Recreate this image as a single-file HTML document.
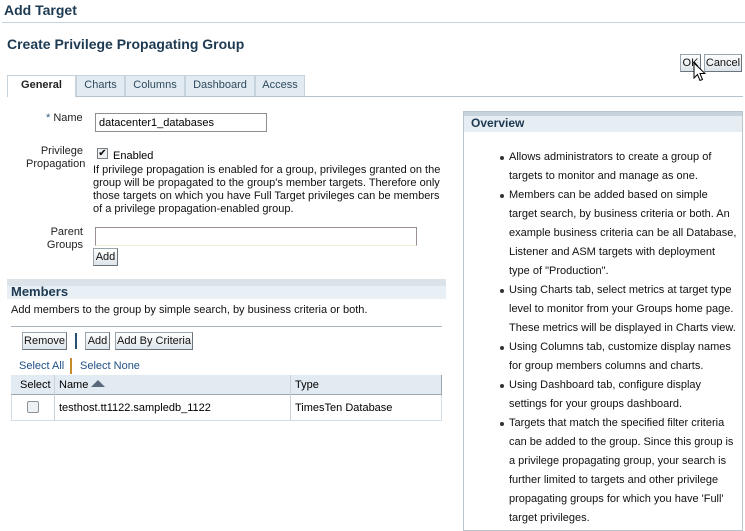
<!DOCTYPE html>
<html><head><meta charset="utf-8"><style>
*{margin:0;padding:0;box-sizing:border-box}
body{width:745px;height:528px;background:#fff;font-family:"Liberation Sans",sans-serif;font-size:11px;color:#000;position:relative;overflow:hidden}
.a{position:absolute;white-space:nowrap}
.btn{position:absolute;height:18px;border:1px solid #9aa5ae;border-right-color:#6b747c;border-bottom-color:#6b747c;background:linear-gradient(#fdfefe,#dde5ea);font-size:11px;line-height:16px;text-align:center;color:#111}
.tab{position:absolute;top:75px;height:21px;background:#e3ebf2;border:1px solid #c7d3dc;border-bottom:none;color:#2e4a5e;font-size:11px;line-height:19px;text-align:center}
.link{color:#1d4f86}
ul{list-style:none}
.ov{position:absolute;left:509px;top:148px;line-height:19px;color:#111}
.ov div{white-space:nowrap;position:relative}
.b{position:absolute;left:-9px;top:8px;width:4px;height:4px;border-radius:2px;background:#333}
</style></head><body>
<div class="a" style="left:4px;top:2px;font-size:14px;font-weight:bold;color:#1d3a52">Add Target</div>
<div class="a" style="left:2px;top:22px;width:743px;height:1px;background:#c5d3df"></div>
<div class="a" style="left:7px;top:36px;font-size:14px;font-weight:bold;color:#1d3a52">Create Privilege Propagating Group</div>
<div class="btn" style="left:680px;top:54px;width:21px">OK</div>
<div class="btn" style="left:704px;top:54px;width:38px">Cancel</div>
<svg class="a" style="left:693px;top:62px" width="14" height="20" viewBox="0 0 14 20"><path d="M1 1 L1 16 L4.5 12.5 L7 18.5 L9.5 17.5 L7 11.5 L12 11.5 Z" fill="#fff" stroke="#000" stroke-width="1"/></svg>
<!-- tabs -->
<div class="a" style="left:7px;top:96px;width:736px;height:1px;background:#b7c3cc"></div>
<div class="a" style="left:7px;top:75px;width:69px;height:22px;background:#fff;border:1px solid #c7d3dc;border-bottom:none;font-weight:bold;color:#222;text-align:center;line-height:19px">General</div>
<div class="tab" style="left:76px;width:49px">Charts</div>
<div class="tab" style="left:125px;width:60px">Columns</div>
<div class="tab" style="left:185px;width:70px">Dashboard</div>
<div class="tab" style="left:255px;width:50px">Access</div>
<!-- form -->
<div class="a" style="left:46px;top:112px;color:#222"><span style="color:#2a5b87">*</span> Name</div>
<div class="a" style="left:95px;top:113px;width:172px;height:19px;border:1px solid #8a8f94;padding:2px 3px;line-height:14px">datacenter1_databases</div>
<div class="a" style="left:26px;top:145px;width:57px;text-align:right;line-height:13px;color:#222">Privilege<br>Propagation</div>
<div class="a" style="left:97px;top:148px;width:11px;height:11px;border:1px solid #7a8087;background:#eef0f2;font-size:10px;line-height:9px;text-align:center">✔</div>
<div class="a" style="left:113px;top:150px">Enabled</div>
<div class="a" style="left:93px;top:164px;line-height:13px;color:#111">If privilege propagation is enabled for a group, privileges granted on the<br>group will be propagated to the group's member targets. Therefore only<br>those targets on which you have Full Target privileges can be members<br>of a privilege propagation-enabled group.</div>
<div class="a" style="left:40px;top:226px;width:43px;text-align:right;line-height:13px;color:#222">Parent<br>Groups</div>
<div class="a" style="left:95px;top:227px;width:322px;height:19px;border:1px solid #9a9091;border-bottom-color:#f0edd8;background:#fff"></div>
<div class="btn" style="left:93px;top:248px;width:25px">Add</div>
<!-- members -->
<div class="a" style="left:7px;top:279px;width:439px;height:20px;background:linear-gradient(#dce3e8 0,#dce3e8 7px,#e8eff5 7px)"></div>
<div class="a" style="left:11px;top:284px;font-size:13px;font-weight:bold;color:#1d3a52">Members</div>
<div class="a" style="left:11px;top:304px;color:#111">Add members to the group by simple search, by business criteria or both.</div>
<div class="a" style="left:11px;top:326px;width:431px;height:1px;background:#aab4bf"></div>
<div class="btn" style="left:22px;top:332px;width:45px">Remove</div>
<div class="a" style="left:75px;top:333px;width:2px;height:16px;background:#2a4f74"></div>
<div class="btn" style="left:85px;top:332px;width:25px">Add</div>
<div class="btn" style="left:115px;top:332px;width:78px">Add By Criteria</div>
<div class="a link" style="left:19px;top:360px">Select All</div>
<div class="a" style="left:70px;top:358px;width:2px;height:16px;background:#c68a2a"></div>
<div class="a link" style="left:80px;top:360px">Select None</div>
<div class="a" style="left:11px;top:375px;width:431px;height:46px;border:1px solid #d4dde3"></div>
<div class="a" style="left:11px;top:375px;width:431px;height:20px;background:#e3ebf2;border-bottom:1px solid #9aa5ae;border-right:1px solid #9aa5ae"></div>
<div class="a" style="left:54px;top:375px;width:1px;height:46px;background:#c9d2d8"></div>
<div class="a" style="left:290px;top:375px;width:1px;height:46px;background:#c9d2d8"></div>
<div class="a" style="left:20px;top:379px">Select</div>
<div class="a" style="left:59px;top:379px">Name</div>
<svg class="a" style="left:91px;top:380px" width="14" height="8"><path d="M0 7 L7 0 L14 7 Z" fill="#59687a"/></svg>
<div class="a" style="left:295px;top:379px">Type</div>
<div class="a" style="left:27px;top:401px;width:12px;height:12px;border:1px solid #8b939a;border-radius:2px;background:#eef1f3"></div>
<div class="a" style="left:59px;top:402px">testhost.tt1122.sampledb_1122</div>
<div class="a" style="left:295px;top:402px">TimesTen Database</div>
<!-- overview -->
<div class="a" style="left:463px;top:111px;width:280px;height:420px;border:1px solid #b9c4cc;background:#fff"></div>
<div class="a" style="left:464px;top:112px;width:278px;height:20px;background:linear-gradient(#c6d2dc 0,#c6d2dc 4px,#e6eef4 4px)"></div>
<div class="a" style="left:471px;top:116px;font-size:12px;font-weight:bold;color:#1d3a52">Overview</div>
<div class="ov">
<div><span class="b"></span>Allows administrators to create a group of</div>
<div>targets to monitor and manage as one.</div>
<div><span class="b"></span>Members can be added based on simple</div>
<div>target search, by business criteria or both. An</div>
<div>example business criteria can be all Database,</div>
<div>Listener and ASM targets with deployment</div>
<div>type of "Production".</div>
<div><span class="b"></span>Using Charts tab, select metrics at target type</div>
<div>level to monitor from your Groups home page.</div>
<div>These metrics will be displayed in Charts view.</div>
<div><span class="b"></span>Using Columns tab, customize display names</div>
<div>for group members columns and charts.</div>
<div><span class="b"></span>Using Dashboard tab, configure display</div>
<div>settings for your groups dashboard.</div>
<div><span class="b"></span>Targets that match the specified filter criteria</div>
<div>can be added to the group. Since this group is</div>
<div>a privilege propagating group, your search is</div>
<div>further limited to targets and other privilege</div>
<div>propagating groups for which you have 'Full'</div>
<div>target privileges.</div>
</div>
</body></html>
